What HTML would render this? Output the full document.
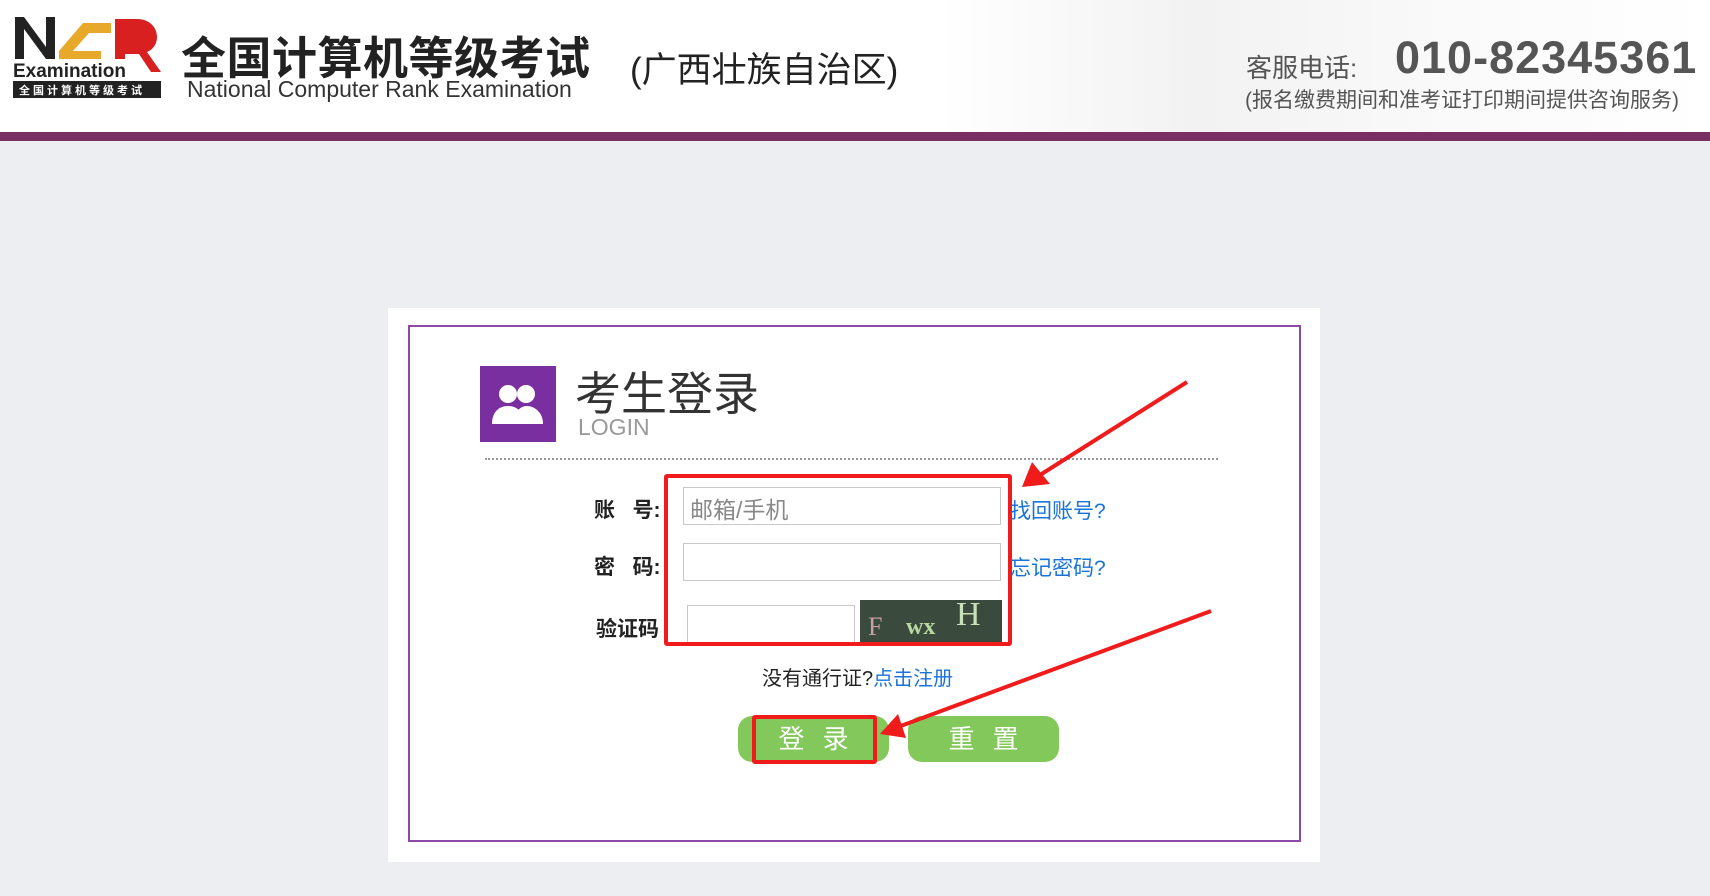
<!DOCTYPE html>
<html><head><meta charset="utf-8"><style>
*{margin:0;padding:0;box-sizing:border-box}
body{width:1710px;height:896px;overflow:hidden;background:#eceef1;font-family:"Liberation Sans","Noto Sans CJK SC",sans-serif;position:relative}
.a{position:absolute;white-space:nowrap}
.hdr{position:absolute;left:0;top:0;width:1710px;height:133px;background:linear-gradient(90deg,#fff 0,#fff 55%,#f2f2f2 70%,#fafafa 85%,#fff 100%)}
.bar{position:absolute;left:0;top:132px;width:1710px;height:9px;background:#7a2f63}
.inp{position:absolute;background:#fff;border:1px solid #c8c8c8}
.btn{position:absolute;background:#82c85a;border-radius:14px;color:#fff;font-size:26px;text-align:center;line-height:46px;letter-spacing:18px}
</style></head><body>
<div class="hdr"></div>
<div class="bar"></div>
<svg class="a" style="left:11px;top:11px" width="155" height="90" viewBox="0 0 155 90">
<path d="M4 48V6h9l22 30V6h9v42h-9L13 18v30z" fill="#222"/>
<path d="M48 40 L72 12 L100 12 L100 22 L78 22 L62 40 L90 40 L90 48 L48 48z" fill="#e8a82a"/>
<path d="M104 48V8h22c12 0 20 8 20 18 0 8-5 13-10 15l14 20h-10l-12-18h-14v5z" fill="#d82020"/>
<text x="2" y="66" font-family="Liberation Sans" font-size="19" font-weight="bold" fill="#222">Examination</text>
<rect x="2" y="70" width="148" height="17" fill="#222"/>
<text x="8" y="83" font-family="Noto Sans CJK SC" font-size="11" font-weight="bold" fill="#fff" letter-spacing="3">全国计算机等级考试</text>
</svg>
<div class="a" style="left:181px;top:22px;font-size:45px;font-weight:bold;color:#222;letter-spacing:0.5px">全国计算机等级考试</div>
<div class="a" style="left:187px;top:76px;font-size:23px;color:#333">National Computer Rank Examination</div>
<div class="a" style="left:630px;top:42px;font-size:35px;color:#222">(广西壮族自治区)</div>
<div class="a" style="left:1246px;top:48px;font-size:26px;color:#555">客服电话:</div>
<div class="a" style="left:1395px;top:32px;font-size:45px;font-weight:bold;color:#555;letter-spacing:1px">010-82345361</div>
<div class="a" style="left:1245px;top:84px;font-size:21px;color:#555">(报名缴费期间和准考证打印期间提供咨询服务)</div>
<div class="a" style="left:388px;top:308px;width:932px;height:554px;background:#fff"></div>
<div class="a" style="left:408px;top:325px;width:893px;height:517px;border:2px solid #8c4aa6"></div>
<div class="a" style="left:480px;top:366px;width:76px;height:76px;background:#7a2fa0"></div>
<svg class="a" style="left:488px;top:380px" width="60" height="50" viewBox="0 0 60 50"><circle cx="20" cy="14" r="9" fill="#fff"/><path d="M4 44c0-12 7-18 16-18s16 6 16 18z" fill="#fff"/><circle cx="38" cy="14" r="9" fill="#fff"/><path d="M26 44c0-12 6-18 13-18s16 6 16 18z" fill="#fff"/></svg>
<div class="a" style="left:575px;top:368px;font-size:46px;line-height:52px;color:#333">考生登录</div>
<div class="a" style="left:578px;top:415px;font-size:23px;line-height:24px;color:#999">LOGIN</div>
<div class="a" style="left:485px;top:458px;width:733px;border-top:2px dotted #999"></div>
<div class="a" style="left:594px;top:494px;font-size:21px;font-weight:bold;color:#222">账&nbsp;&nbsp;&nbsp;号:</div>
<div class="a" style="left:594px;top:551px;font-size:21px;font-weight:bold;color:#222">密&nbsp;&nbsp;&nbsp;码:</div>
<div class="a" style="left:596px;top:613px;font-size:21px;font-weight:bold;color:#222">验证码</div>
<div class="inp" style="left:683px;top:487px;width:318px;height:38px;font-size:23px;color:#888;padding:3px 6px">邮箱/手机</div>
<div class="inp" style="left:683px;top:543px;width:318px;height:38px"></div>
<div class="inp" style="left:687px;top:605px;width:168px;height:40px"></div>
<div class="a" style="left:860px;top:600px;width:142px;height:42px;background:#3a4a3c"><span style="position:absolute;left:8px;top:12px;font-family:'Liberation Serif';font-size:26px;color:#c9a0a0">F</span><span style="position:absolute;left:46px;top:14px;font-family:'Liberation Serif';font-size:24px;font-weight:bold;color:#b8d8a0">wx</span><span style="position:absolute;left:96px;top:-4px;font-family:'Liberation Serif';font-size:34px;color:#c8e0b8">H</span></div>
<div class="a" style="left:664px;top:474px;width:348px;height:172px;border:4px solid #f01c1c;border-radius:3px"></div>
<div class="a" style="left:1010px;top:495px;font-size:21px;color:#1a73d8">找回账号?</div>
<div class="a" style="left:1010px;top:552px;font-size:21px;color:#1a73d8">忘记密码?</div>
<div class="a" style="left:762px;top:662px;font-size:20px;color:#222">没有通行证?<span style="color:#1a73d8">点击注册</span></div>
<div class="btn" style="left:738px;top:716px;width:151px;height:46px;padding-left:18px">登录</div>
<div class="btn" style="left:908px;top:716px;width:151px;height:46px;padding-left:18px">重置</div>
<div class="a" style="left:752px;top:715px;width:125px;height:49px;border:4px solid #f01c1c;border-radius:3px"></div>
<svg class="a" style="left:0;top:0" width="1710" height="896">
<line x1="1187" y1="382" x2="1040" y2="475" stroke="#f01c1c" stroke-width="4"/>
<path d="M1022 487 L1032 462 L1050 484z" fill="#f01c1c"/>
<line x1="1211" y1="611" x2="898" y2="727" stroke="#f01c1c" stroke-width="4"/>
<path d="M880 734 L898 714 L906 738z" fill="#f01c1c"/>
</svg>
</body></html>
